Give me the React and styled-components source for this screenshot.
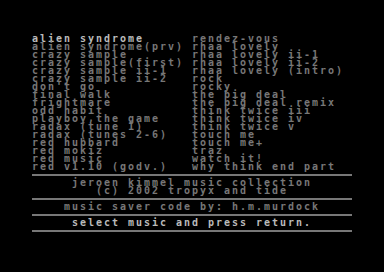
import React from 'react'
import styled, { createGlobalStyle } from 'styled-components'

const left = [
  'alien syndrome',
  'alien syndrome(prv)',
  'crazy sample',
  'crazy sample(first)',
  'crazy sample ii-1',
  'crazy sample ii-2',
  "don't go",
  'final walk',
  'frightmare',
  'odd habit',
  'playboy,the game',
  'radax (tune 1)',
  'radax (tunes 2-6)',
  'red hubbard',
  'red mokiz',
  'red music',
  'red v1.10 (godv.)',
]

const right = [
  'rendez-vous',
  'rhaa lovely',
  'rhaa lovely ii-1',
  'rhaa lovely ii-2',
  'rhaa lovely (intro)',
  'rock',
  'rocky',
  'the big deal',
  'the big deal remix',
  'think twice iii',
  'think twice iv',
  'think twice v',
  'touch me',
  'touch me+',
  'traz',
  'watch it!',
  'why think end part',
]

const Global = createGlobalStyle`
  html, body {
    margin: 0;
    padding: 0;
    background: #000;
  }
`

const Screen = styled.div`
  width: 384px;
  height: 272px;
  box-sizing: border-box;
  padding: 35px 32px 0;
  background: #000;
  overflow: hidden;
`

const Text = styled.div`
  width: 320px;
  font-family: "DejaVu Sans Mono", "Liberation Mono", monospace;
  font-weight: bold;
  font-size: 10px;
  letter-spacing: 1.98px;
  color: #777777;
`

const Columns = styled.div`
  display: grid;
  grid-template-columns: 160px 160px;
`

const List = styled.div`
  display: flex;
  flex-direction: column;
`

const Row = styled.div`
  height: 8px;
  line-height: 8px;
  white-space: pre;
  padding-left: ${p => (p.$col || 0) * 8}px;
  color: ${p => (p.$bright ? '#bbbbbb' : 'inherit')};
`

const Rule = styled.div`
  height: 8px;
  display: flex;
  flex-direction: column;
  padding-top: 3px;
  box-sizing: border-box;
  &::before {
    content: '';
    height: 2px;
    background: #777777;
  }
`

export default function App() {
  return (
    <>
      <Global />
      <Screen>
        <Text>
          <Columns>
            <List>
              {left.map((t, i) => (
                <Row key={t} $bright={i === 0}>{t}</Row>
              ))}
            </List>
            <List>
              {right.map(t => (
                <Row key={t}>{t}</Row>
              ))}
            </List>
          </Columns>
          <Rule />
          <Row $col={5}>jeroen kimmel music collection</Row>
          <Row $col={8}>(c) 2002 tropyx and tide</Row>
          <Rule />
          <Row $col={4}>music saver code by: h.m.murdock</Row>
          <Rule />
          <Row $col={5} $bright>select music and press return.</Row>
          <Rule />
        </Text>
      </Screen>
    </>
  )
}
